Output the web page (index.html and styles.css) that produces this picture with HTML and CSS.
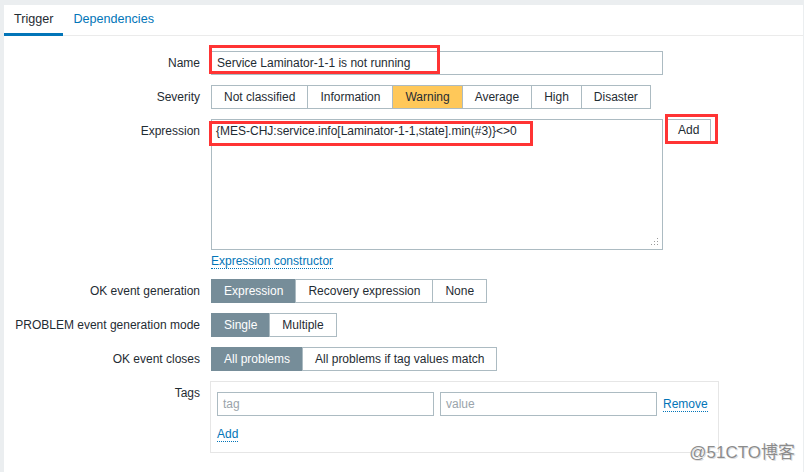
FILE: index.html
```html
<!DOCTYPE html>
<html>
<head>
<meta charset="utf-8">
<link rel="stylesheet" href="styles.css">
</head>
<body>
<div class="page">
  <div class="tabs">
    <span class="tab active">Trigger</span>
    <span class="tab">Dependencies</span>
  </div>
  <div class="form">
    <div class="row">
      <div class="lbl">Name</div>
      <div class="field">
        <div class="input wide">Service Laminator-1-1 is not running</div>
        <span class="mark mark-name"></span>
      </div>
    </div>
    <div class="row">
      <div class="lbl">Severity</div>
      <div class="field seg">
        <span>Not classified</span><span>Information</span><span class="warn">Warning</span><span>Average</span><span>High</span><span>Disaster</span>
      </div>
    </div>
    <div class="row">
      <div class="lbl">Expression</div>
      <div class="field">
        <div class="expr-line">
          <div class="textarea">{MES-CHJ:service.info[Laminator-1-1,state].min(#3)}&lt;&gt;0
            <svg class="grip" width="9" height="9" viewBox="0 0 9 9"><rect x="7" y="1" width="1" height="1"/><rect x="4" y="4" width="1" height="1"/><rect x="7" y="4" width="1" height="1"/><rect x="1" y="7" width="1" height="1"/><rect x="4" y="7" width="1" height="1"/><rect x="7" y="7" width="1" height="1"/></svg>
          </div>
          <div class="btn">Add</div>
        </div>
        <div class="below"><span class="link">Expression constructor</span></div>
        <span class="mark mark-expr"></span>
        <span class="mark mark-add"></span>
      </div>
    </div>
    <div class="row">
      <div class="lbl">OK event generation</div>
      <div class="field seg">
        <span class="on">Expression</span><span>Recovery expression</span><span>None</span>
      </div>
    </div>
    <div class="row">
      <div class="lbl">PROBLEM event generation mode</div>
      <div class="field seg">
        <span class="on">Single</span><span>Multiple</span>
      </div>
    </div>
    <div class="row">
      <div class="lbl">OK event closes</div>
      <div class="field seg">
        <span class="on">All problems</span><span>All problems if tag values match</span>
      </div>
    </div>
    <div class="row">
      <div class="lbl">Tags</div>
      <div class="field">
        <div class="tagbox">
          <div class="tagrow">
            <div class="input tagin placeholder">tag</div>
            <div class="input tagin placeholder">value</div>
            <span class="link">Remove</span>
          </div>
          <div class="addrow"><span class="link">Add</span></div>
        </div>
      </div>
    </div>
  </div>
  <div class="watermark">@51CTO博客</div>
</div>
</body>
</html>
```
FILE: styles.css
```css
* { box-sizing: border-box; }
body {
  margin: 0;
  background: #ebeef0;
  font: 12px "Liberation Sans", Arial, sans-serif;
  color: #1f2c33;
}
.page {
  margin: 5px 1px 0 4px;
  background: #fff;
  height: 467px;
  position: relative;
}
.tabs {
  display: flex;
  height: 31px;
  border-bottom: 1px solid #ebebeb;
}
.tab {
  height: 31px;
  line-height: 28px;
  padding: 0 10px;
  font-size: 12.6px;
  border-bottom: 3px solid transparent;
  margin-bottom: -1px;
  color: #0275b8;
}
.tab.active {
  color: #1f2c33;
  border-bottom-color: #0275b8;
}
.form {
  padding-top: 15px;
  display: flex;
  flex-direction: column;
  gap: 10px;
}
.row {
  display: flex;
  align-items: flex-start;
}
.lbl {
  width: 196px;
  flex: none;
  text-align: right;
  line-height: 24px;
}
.field {
  margin-left: 11px;
  position: relative;
}
.input {
  height: 24px;
  border: 1px solid #acbbc2;
  padding: 0 5px;
  line-height: 22px;
  white-space: nowrap;
}
.wide { width: 452px; }
.placeholder { color: #9aa4ab; }
.seg { display: flex; }
.seg span {
  height: 24px;
  line-height: 22px;
  border: 1px solid #acbbc2;
  padding: 0 12px;
  margin-left: -1px;
  white-space: nowrap;
  background: #fff;
}
.seg span:first-child { margin-left: 0; }
.seg .warn { background: #ffc859; }
.seg .on {
  background: #768d99;
  border-color: #768d99;
  color: #fff;
}
.expr-line { display: flex; align-items: flex-start; }
.textarea {
  position: relative;
  width: 452px;
  height: 131px;
  border: 1px solid #acbbc2;
  padding: 4px 4px;
  line-height: 14px;
}
.grip {
  position: absolute;
  right: 3px;
  bottom: 3px;
  fill: #9a9a9a;
}
.btn {
  margin-left: 3px;
  height: 23px;
  line-height: 21px;
  padding: 0 11px;
  border: 1px solid #acbbc2;
  border-bottom-color: #98a7ae;
  background: #fff;
}
.below {
  padding-top: 4px;
  height: 19px;
}
.link {
  display: inline-block;
  color: #0275b8;
  line-height: 14px;
  border-bottom: 1px dotted #0275b8;
}
.mark {
  position: absolute;
  border: 3px solid #ff3434;
  pointer-events: none;
}
.mark-name { left: -2px; top: -6px; width: 231px; height: 29px; }
.mark-expr { left: -2px; top: 2px; width: 324px; height: 25px; }
.mark-add { left: 454px; top: -5px; width: 53px; height: 30px; }
.tagbox {
  margin-left: -1px;
  width: 509px;
  border: 1px solid #e6e6e6;
  padding: 10px 9px 10px 6px;
}
.tagrow {
  display: flex;
  align-items: center;
  gap: 6px;
}
.tagin { width: 217px; }
.addrow { margin-top: 11px; }
.watermark {
  position: absolute;
  right: 8px;
  bottom: 9px;
  font: 17px "Liberation Sans", "Noto Sans CJK SC", sans-serif;
  color: #8c8c8c;
  text-shadow: 0 0 1px #fff, 1px 1px 0 #ddd;
}
```
